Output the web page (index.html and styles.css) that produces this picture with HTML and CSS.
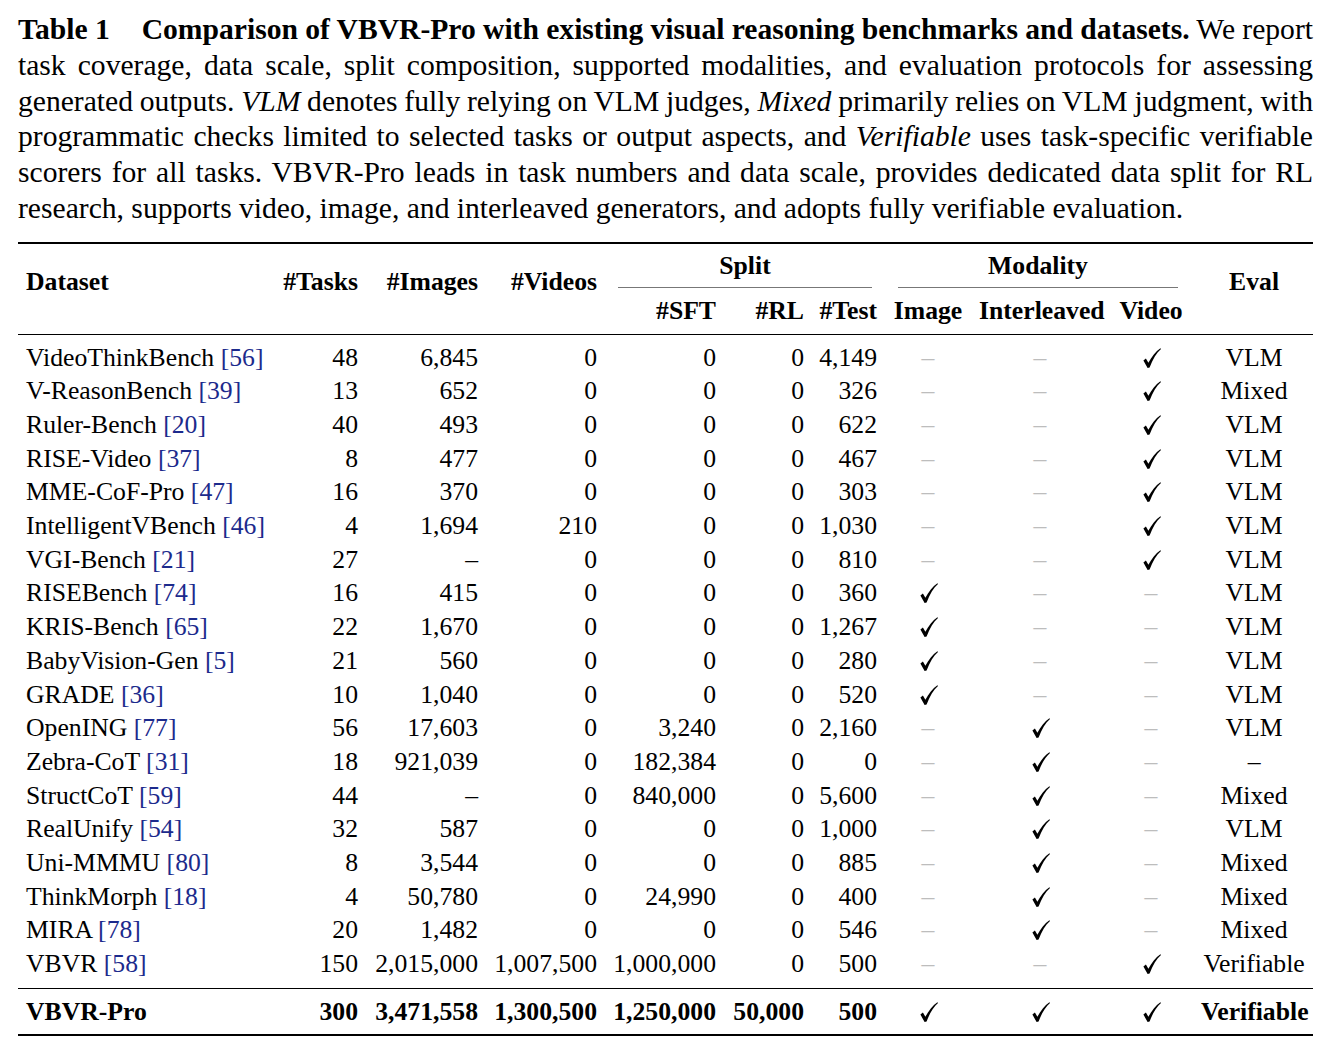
FILE: index.html
```html
<!DOCTYPE html>
<html>
<head>
<meta charset="utf-8">
<link rel="stylesheet" href="styles.css">
</head>
<body>
<svg class="defs" width="0" height="0" aria-hidden="true">
  <defs>
    <symbol id="chk" viewBox="0 0 18 20">
      <path d="M0.4 12.6 L2.9 10.6 L5.4 14.8 C8.6 8.6 12.6 3.4 17.4 0.2 L18 0.9 C13.6 4.8 9.7 11 6.6 19.6 L4.6 19.9 Z" fill="#000"/>
    </symbol>
  </defs>
</svg>
<div class="page">
  <div class="caption">
    <div class="ln"><b><span class="tno">Table 1</span>Comparison of VBVR-Pro with existing visual reasoning benchmarks and datasets.</b> We report</div>
    <div class="ln">task coverage, data scale, split composition, supported modalities, and evaluation protocols for assessing</div>
    <div class="ln">generated outputs. <i>VLM</i> denotes fully relying on VLM judges, <i>Mixed</i> primarily relies on VLM judgment, with</div>
    <div class="ln">programmatic checks limited to selected tasks or output aspects, and <i>Verifiable</i> uses task-specific verifiable</div>
    <div class="ln">scorers for all tasks. VBVR-Pro leads in task numbers and data scale, provides dedicated data split for RL</div>
    <div class="ln last">research, supports video, image, and interleaved generators, and adopts fully verifiable evaluation.</div>
  </div>

  <table class="tbl">
    <colgroup>
      <col class="c-ds"><col class="c-tasks"><col class="c-img"><col class="c-vid"><col class="c-sft"><col class="c-rl"><col class="c-test"><col class="c-mi"><col class="c-mil"><col class="c-mv"><col class="c-eval">
    </colgroup>
    <thead>
      <tr class="h1">
        <th rowspan="2" class="l hs">Dataset</th>
        <th rowspan="2" class="r hs">#Tasks</th>
        <th rowspan="2" class="r hs">#Images</th>
        <th rowspan="2" class="r hs">#Videos</th>
        <th colspan="3" class="grp"><div class="cm split">Split</div></th>
        <th colspan="3" class="grp"><div class="cm modal">Modality</div></th>
        <th rowspan="2" class="c hs">Eval</th>
      </tr>
      <tr class="h2">
        <th class="r">#SFT</th>
        <th class="r">#RL</th>
        <th class="r">#Test</th>
        <th class="c">Image</th>
        <th class="c">Interleaved</th>
        <th class="c">Video</th>
      </tr>
    </thead>
    <tbody>
      <tr class="first"><td>VideoThinkBench <span class="ref">[56]</span></td><td>48</td><td>6,845</td><td>0</td><td>0</td><td>0</td><td>4,149</td><td class="d">–</td><td class="d">–</td><td class="k"><svg class="ck"><use href="#chk"/></svg></td><td class="e">VLM</td></tr>
      <tr><td>V-ReasonBench <span class="ref">[39]</span></td><td>13</td><td>652</td><td>0</td><td>0</td><td>0</td><td>326</td><td class="d">–</td><td class="d">–</td><td class="k"><svg class="ck"><use href="#chk"/></svg></td><td class="e">Mixed</td></tr>
      <tr><td>Ruler-Bench <span class="ref">[20]</span></td><td>40</td><td>493</td><td>0</td><td>0</td><td>0</td><td>622</td><td class="d">–</td><td class="d">–</td><td class="k"><svg class="ck"><use href="#chk"/></svg></td><td class="e">VLM</td></tr>
      <tr><td>RISE-Video <span class="ref">[37]</span></td><td>8</td><td>477</td><td>0</td><td>0</td><td>0</td><td>467</td><td class="d">–</td><td class="d">–</td><td class="k"><svg class="ck"><use href="#chk"/></svg></td><td class="e">VLM</td></tr>
      <tr><td>MME-CoF-Pro <span class="ref">[47]</span></td><td>16</td><td>370</td><td>0</td><td>0</td><td>0</td><td>303</td><td class="d">–</td><td class="d">–</td><td class="k"><svg class="ck"><use href="#chk"/></svg></td><td class="e">VLM</td></tr>
      <tr><td>IntelligentVBench <span class="ref">[46]</span></td><td>4</td><td>1,694</td><td>210</td><td>0</td><td>0</td><td>1,030</td><td class="d">–</td><td class="d">–</td><td class="k"><svg class="ck"><use href="#chk"/></svg></td><td class="e">VLM</td></tr>
      <tr><td>VGI-Bench <span class="ref">[21]</span></td><td>27</td><td>–</td><td>0</td><td>0</td><td>0</td><td>810</td><td class="d">–</td><td class="d">–</td><td class="k"><svg class="ck"><use href="#chk"/></svg></td><td class="e">VLM</td></tr>
      <tr><td>RISEBench <span class="ref">[74]</span></td><td>16</td><td>415</td><td>0</td><td>0</td><td>0</td><td>360</td><td class="k"><svg class="ck"><use href="#chk"/></svg></td><td class="d">–</td><td class="d">–</td><td class="e">VLM</td></tr>
      <tr><td>KRIS-Bench <span class="ref">[65]</span></td><td>22</td><td>1,670</td><td>0</td><td>0</td><td>0</td><td>1,267</td><td class="k"><svg class="ck"><use href="#chk"/></svg></td><td class="d">–</td><td class="d">–</td><td class="e">VLM</td></tr>
      <tr><td>BabyVision-Gen <span class="ref">[5]</span></td><td>21</td><td>560</td><td>0</td><td>0</td><td>0</td><td>280</td><td class="k"><svg class="ck"><use href="#chk"/></svg></td><td class="d">–</td><td class="d">–</td><td class="e">VLM</td></tr>
      <tr><td>GRADE <span class="ref">[36]</span></td><td>10</td><td>1,040</td><td>0</td><td>0</td><td>0</td><td>520</td><td class="k"><svg class="ck"><use href="#chk"/></svg></td><td class="d">–</td><td class="d">–</td><td class="e">VLM</td></tr>
      <tr><td>OpenING <span class="ref">[77]</span></td><td>56</td><td>17,603</td><td>0</td><td>3,240</td><td>0</td><td>2,160</td><td class="d">–</td><td class="k"><svg class="ck"><use href="#chk"/></svg></td><td class="d">–</td><td class="e">VLM</td></tr>
      <tr><td>Zebra-CoT <span class="ref">[31]</span></td><td>18</td><td>921,039</td><td>0</td><td>182,384</td><td>0</td><td>0</td><td class="d">–</td><td class="k"><svg class="ck"><use href="#chk"/></svg></td><td class="d">–</td><td class="e">–</td></tr>
      <tr><td>StructCoT <span class="ref">[59]</span></td><td>44</td><td>–</td><td>0</td><td>840,000</td><td>0</td><td>5,600</td><td class="d">–</td><td class="k"><svg class="ck"><use href="#chk"/></svg></td><td class="d">–</td><td class="e">Mixed</td></tr>
      <tr><td>RealUnify <span class="ref">[54]</span></td><td>32</td><td>587</td><td>0</td><td>0</td><td>0</td><td>1,000</td><td class="d">–</td><td class="k"><svg class="ck"><use href="#chk"/></svg></td><td class="d">–</td><td class="e">VLM</td></tr>
      <tr><td>Uni-MMMU <span class="ref">[80]</span></td><td>8</td><td>3,544</td><td>0</td><td>0</td><td>0</td><td>885</td><td class="d">–</td><td class="k"><svg class="ck"><use href="#chk"/></svg></td><td class="d">–</td><td class="e">Mixed</td></tr>
      <tr><td>ThinkMorph <span class="ref">[18]</span></td><td>4</td><td>50,780</td><td>0</td><td>24,990</td><td>0</td><td>400</td><td class="d">–</td><td class="k"><svg class="ck"><use href="#chk"/></svg></td><td class="d">–</td><td class="e">Mixed</td></tr>
      <tr><td>MIRA <span class="ref">[78]</span></td><td>20</td><td>1,482</td><td>0</td><td>0</td><td>0</td><td>546</td><td class="d">–</td><td class="k"><svg class="ck"><use href="#chk"/></svg></td><td class="d">–</td><td class="e">Mixed</td></tr>
      <tr class="lastrow"><td>VBVR <span class="ref">[58]</span></td><td>150</td><td>2,015,000</td><td>1,007,500</td><td>1,000,000</td><td>0</td><td>500</td><td class="d">–</td><td class="d">–</td><td class="k"><svg class="ck"><use href="#chk"/></svg></td><td class="e">Verifiable</td></tr>
    </tbody>
    <tbody class="pro">
      <tr><td>VBVR-Pro</td><td>300</td><td>3,471,558</td><td>1,300,500</td><td>1,250,000</td><td>50,000</td><td>500</td><td class="k"><svg class="ck"><use href="#chk"/></svg></td><td class="k"><svg class="ck"><use href="#chk"/></svg></td><td class="k"><svg class="ck"><use href="#chk"/></svg></td><td class="e">Verifiable</td></tr>
    </tbody>
  </table>
</div>
</body>
</html>
```

FILE: styles.css
```css
html, body {
  margin: 0;
  padding: 0;
  background: #fff;
}

body {
  font-family: "Liberation Serif", "DejaVu Serif", serif;
  color: #000;
}

.defs {
  position: absolute;
  width: 0;
  height: 0;
  overflow: hidden;
}

.page {
  padding: 12px 20px 0 18px;
  width: 1295px;
}

.caption {
  font-size: 29.6px;
  line-height: 35.8px;
}

.caption .ln {
  text-align: justify;
  text-align-last: justify;
  white-space: nowrap;
  word-spacing: -1.8px;
}

.caption .ln.last {
  text-align-last: left;
  word-spacing: normal;
}

.tno {
  margin-right: 32px;
}

.tbl {
  margin-top: 15px;
  width: 1295px;
  border-collapse: collapse;
  table-layout: fixed;
  font-size: 25.7px;
}

.c-ds { width: 258px; }
.c-tasks { width: 88px; }
.c-img { width: 120px; }
.c-vid { width: 119px; }
.c-sft { width: 119px; }
.c-rl { width: 88px; }
.c-test { width: 73px; }
.c-mi { width: 90px; }
.c-mil { width: 134px; }
.c-mv { width: 88px; }
.c-eval { width: 118px; }

.tbl th {
  font-weight: bold;
  line-height: 34px;
  padding: 0 6px;
  white-space: nowrap;
}

.tbl .h1 {
  border-top: 2px solid #000;
}

.tbl .h1 th {
  padding-top: 5px;
}

.tbl th.hs {
  vertical-align: top;
  padding-top: 21px;
}

.tbl th.grp {
  padding-left: 0;
  padding-right: 0;
  vertical-align: top;
}

.tbl .cm {
  text-align: center;
  padding-bottom: 4px;
  border-bottom: 1px solid #777;
}

.tbl .cm.split {
  margin: 0 11px 0 15px;
}

.tbl .cm.modal {
  margin: 0 17px 0 15px;
}

.tbl .h2 {
  border-bottom: 1px solid #000;
}

.tbl .h2 th {
  padding-top: 6px;
  padding-bottom: 6px;
}

.tbl .l { text-align: left; padding-left: 8px; }
.tbl .r { text-align: right; }
.tbl .c { text-align: center; }

.tbl td {
  line-height: 33.67px;
  height: 33.67px;
  padding: 0 6px;
  text-align: right;
  white-space: nowrap;
}

.tbl td:first-child {
  text-align: left;
  padding-left: 8px;
}

.tbl td.d,
.tbl td.k,
.tbl td.e {
  text-align: center;
}

.tbl td.d {
  color: #bdbdbd;
}

.ck {
  display: inline-block;
  width: 18px;
  height: 20px;
  vertical-align: -2px;
  margin-left: 2px;
}

.ref {
  color: #1c2a8c;
}

.tbl tr.first td {
  padding-top: 6px;
}

.tbl tr.lastrow td {
  padding-bottom: 7px;
}

.tbl tbody.pro {
  border-top: 1px solid #000;
  border-bottom: 2px solid #000;
  font-weight: bold;
}

.tbl tbody.pro td {
  padding-top: 6px;
  padding-bottom: 6px;
}
```
